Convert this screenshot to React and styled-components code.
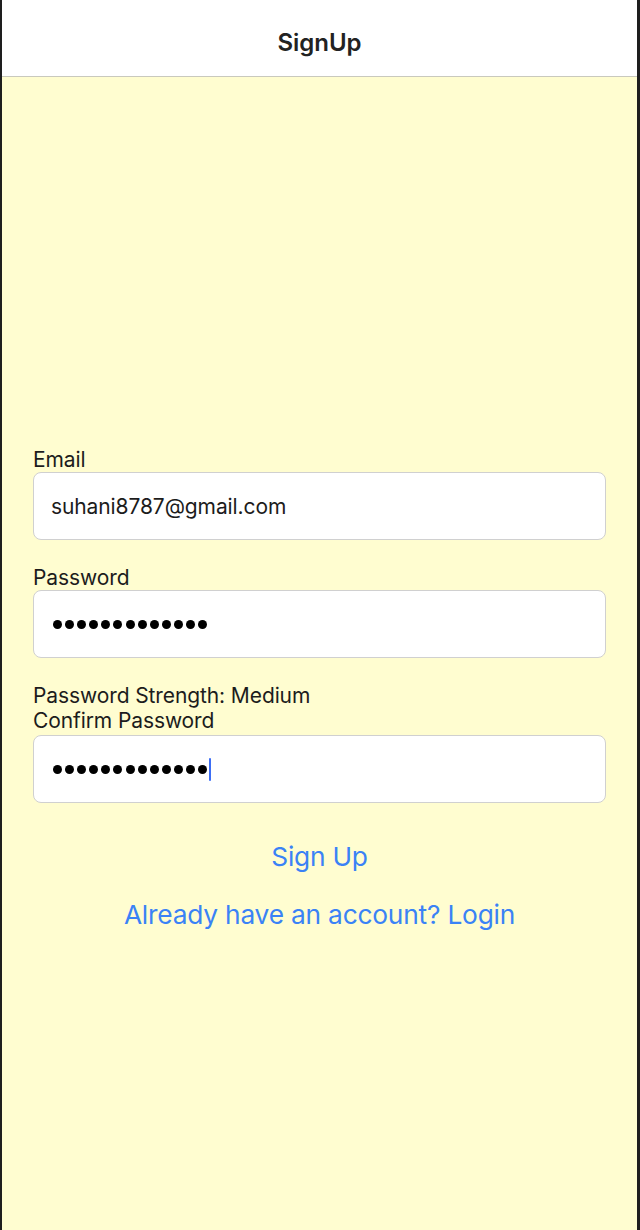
import React from "react";
import styled, { createGlobalStyle } from "styled-components";

const Global = createGlobalStyle`
  html, body { margin: 0; padding: 0; background: #1e1e1e; }
  body { font-family: Inter, "Noto Sans", Roboto, sans-serif; -webkit-font-smoothing: antialiased; }
  * { box-sizing: border-box; }
`;

const Frame = styled.div`
  width: 640px;
  height: 1230px;
  display: flex;
  flex-direction: column;
  border-left: 2px solid #1e1e1e;
  border-right: 3px solid #1e1e1e;
  background: #fffdd0;
  overflow: hidden;
`;

const Header = styled.header`
  height: 77px;
  flex: none;
  background: #ffffff;
  border-bottom: 1px solid #c9c9bd;
  display: flex;
  align-items: center;
  justify-content: center;
  padding-top: 9px;
`;

const Title = styled.h1`
  margin: 0;
  font-size: 24px;
  font-weight: 600;
  color: #222222;
  letter-spacing: 0;
`;

const Body = styled.main`
  flex: 1;
  padding: 370px 31px 0 31px;
  display: flex;
  flex-direction: column;
`;

const Label = styled.div`
  font-size: 21px;
  line-height: 25px;
  color: #1c1c1c;
  letter-spacing: -0.1px;
`;

const Field = styled.div`
  height: 68px;
  margin-top: ${(p) => p.$mt || 0}px;
  margin-bottom: ${(p) => p.$mb || 0}px;
  background: #ffffff;
  border: 1.5px solid #d0d0d0;
  border-radius: 8px;
  display: flex;
  align-items: center;
  padding-left: 17px;
`;

const Value = styled.span`
  font-size: 21px;
  color: #1c1c1c;
  letter-spacing: -0.1px;
`;

const Dots = styled.span`
  display: flex;
  align-items: center;
  gap: 3.1px;
  padding-left: 2px;
`;

const Dot = styled.span`
  width: 9px;
  height: 9px;
  border-radius: 50%;
  background: #000000;
`;

const Caret = styled.span`
  width: 2px;
  height: 23px;
  margin-left: -1px;
  background: #3d6ef5;
  border-radius: 1px;
`;

const Actions = styled.div`
  display: flex;
  flex-direction: column;
  align-items: center;
  gap: 29px;
  margin-top: 39px;
`;

const LinkButton = styled.button`
  background: none;
  border: none;
  padding: 0;
  font-family: inherit;
  font-size: 26.3px;
  line-height: 29px;
  color: #3a82f6;
  letter-spacing: -0.2px;
  cursor: pointer;
`;

const Password = ({ count, caret }) => (
  <Dots>
    {Array.from({ length: count }).map((_, i) => (
      <Dot key={i} />
    ))}
    {caret && <Caret />}
  </Dots>
);

export default function App() {
  return (
    <>
      <Global />
      <Frame>
        <Header>
          <Title>SignUp</Title>
        </Header>
        <Body>
          <Label>Email</Label>
          <Field $mb={25}>
            <Value>suhani8787@gmail.com</Value>
          </Field>
          <Label>Password</Label>
          <Field $mb={25}>
            <Password count={13} />
          </Field>
          <Label>Password Strength: Medium</Label>
          <Label>Confirm Password</Label>
          <Field $mt={2}>
            <Password count={13} caret />
          </Field>
          <Actions>
            <LinkButton>Sign Up</LinkButton>
            <LinkButton>Already have an account? Login</LinkButton>
          </Actions>
        </Body>
      </Frame>
    </>
  );
}
